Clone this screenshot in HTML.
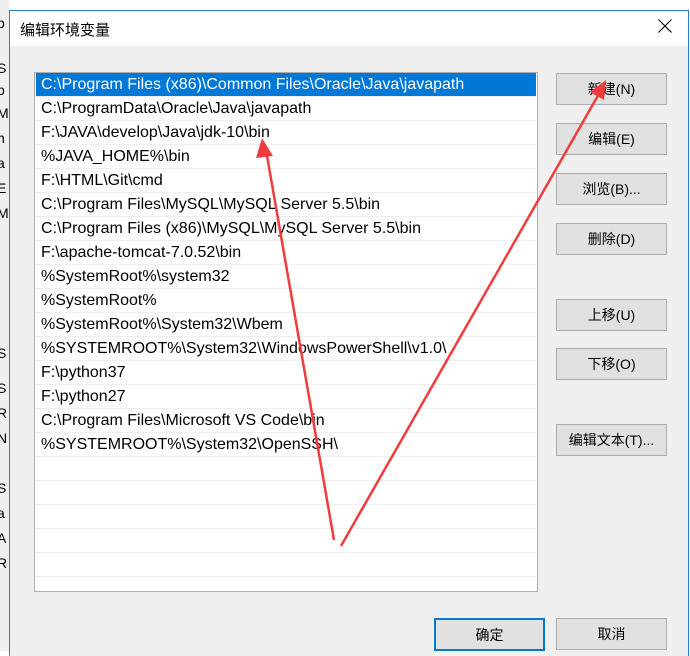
<!DOCTYPE html>
<html><head><meta charset="utf-8"><style>
body{margin:0;width:690px;height:651px;overflow:hidden;background:#fff;font-family:"Liberation Sans","Noto Sans CJK SC",sans-serif;position:relative}
.side{position:absolute;left:0;top:0;width:9px;height:651px;background:#f0f0f0;font-size:14px;color:#000;overflow:hidden}
.side div{position:absolute;left:-3px}
.dlg{position:absolute;left:9px;top:10px;width:678px;height:645px;border:1px solid #2b7bd3;border-bottom:none;background:#f0f0f0}
.title{position:absolute;left:0;top:0;width:678px;height:35px;background:#fff;font-size:15px}
.title .t{position:absolute;left:10px;top:8px}
.x{position:absolute;right:16px;top:8px}
.list{position:absolute;left:24px;top:61px;width:502px;height:518px;border:1px solid #adadad;background:#fff}
.row{height:23px;border-bottom:1px solid #efefef;font-size:16px;line-height:24px;padding-left:5px;margin:0 1px;white-space:nowrap}
.sel{background:#0078d7;color:#fff}
.btn{position:absolute;width:109px;height:30px;border:1px solid #adadad;background:#e1e1e1;font-size:14px;text-align:center;line-height:30px}
</style></head><body>
<div class="side"><div style="top:15px">b</div><div style="top:60px">S</div><div style="top:82px">b</div><div style="top:105px">M</div><div style="top:130px">n</div><div style="top:155px">a</div><div style="top:180px">E</div><div style="top:205px">M</div><div style="top:345px">S</div><div style="top:380px">S</div><div style="top:405px">R</div><div style="top:430px">N</div><div style="top:455px">I</div><div style="top:480px">S</div><div style="top:505px">a</div><div style="top:530px">A</div><div style="top:555px">R</div></div>
<div class="dlg">
<div class="title"><span class="t">编辑环境变量</span><svg class="x" width="14" height="14"><path d="M0.5 0.5L13.5 13.5M13.5 0.5L0.5 13.5" stroke="#000" stroke-width="1.1"/></svg></div>
<div class="list">
<div class="row sel">C:\Program Files (x86)\Common Files\Oracle\Java\javapath</div>
<div class="row">C:\ProgramData\Oracle\Java\javapath</div>
<div class="row">F:\JAVA\develop\Java\jdk-10\bin</div>
<div class="row">%JAVA_HOME%\bin</div>
<div class="row">F:\HTML\Git\cmd</div>
<div class="row">C:\Program Files\MySQL\MySQL Server 5.5\bin</div>
<div class="row">C:\Program Files (x86)\MySQL\MySQL Server 5.5\bin</div>
<div class="row">F:\apache-tomcat-7.0.52\bin</div>
<div class="row">%SystemRoot%\system32</div>
<div class="row">%SystemRoot%</div>
<div class="row">%SystemRoot%\System32\Wbem</div>
<div class="row">%SYSTEMROOT%\System32\WindowsPowerShell\v1.0\</div>
<div class="row">F:\python37</div>
<div class="row">F:\python27</div>
<div class="row">C:\Program Files\Microsoft VS Code\bin</div>
<div class="row">%SYSTEMROOT%\System32\OpenSSH\</div>
<div class="row"></div><div class="row"></div><div class="row"></div><div class="row"></div><div class="row"></div>
</div>
<div class="btn" style="left:546px;top:62px">新建(N)</div>
<div class="btn" style="left:546px;top:112px">编辑(E)</div>
<div class="btn" style="left:546px;top:162px">浏览(B)...</div>
<div class="btn" style="left:546px;top:212px">删除(D)</div>
<div class="btn" style="left:546px;top:288px">上移(U)</div>
<div class="btn" style="left:546px;top:337px">下移(O)</div>
<div class="btn" style="left:546px;top:413px">编辑文本(T)...</div>
<div class="btn" style="left:424px;top:607px;border:2px solid #0078d7;width:107px;height:29px">确定</div>
<div class="btn" style="left:546px;top:607px">取消</div>
</div>
<svg style="position:absolute;left:0;top:0" width="690" height="651">
<path d="M334 540 L266 150" stroke="#f03c3c" stroke-width="2.5" fill="none"/>
<path d="M262 138 L256 158 L273 156 Z" fill="#f03c3c"/>
<path d="M341 546 L600 92" stroke="#f03c3c" stroke-width="2.5" fill="none"/>
<path d="M606 80 L590 92 L604 100 Z" fill="#f03c3c"/>
</svg>
</body></html>
